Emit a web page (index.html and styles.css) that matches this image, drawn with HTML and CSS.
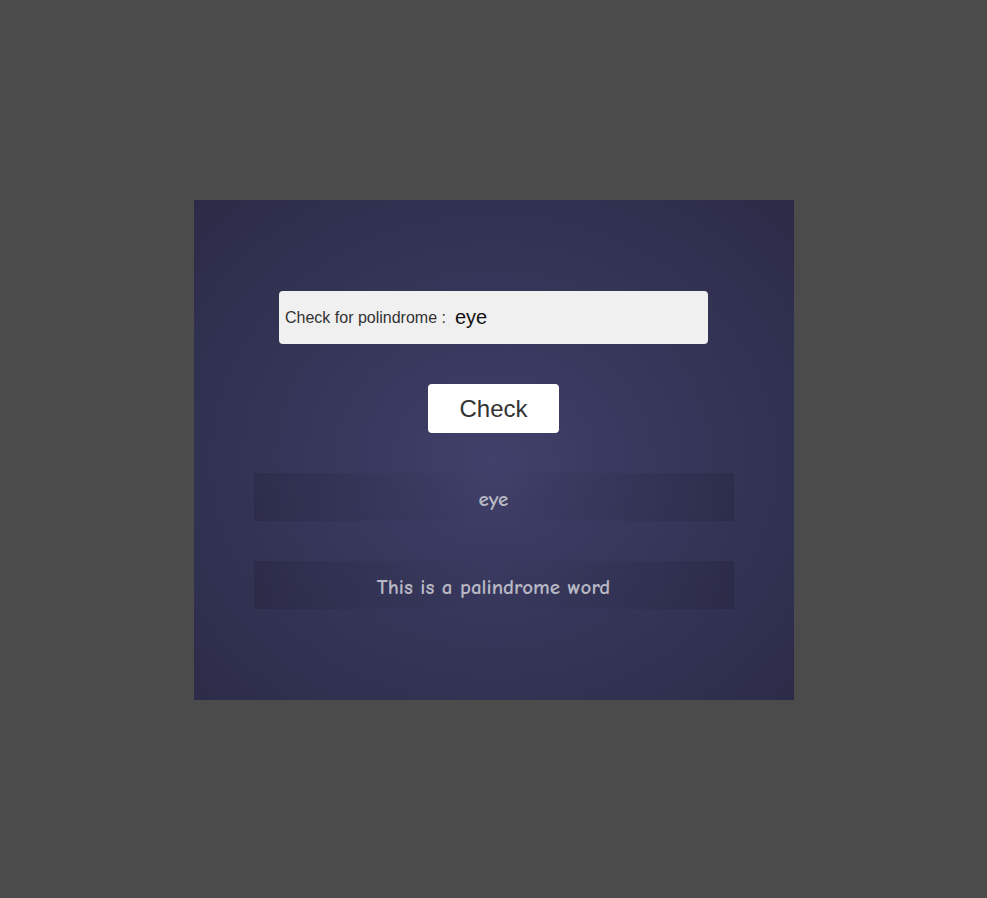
FILE: index.html
```html
<!DOCTYPE html>
<html>
<head>
<meta charset="utf-8">
<link rel="stylesheet" href="styles.css">
</head>
<body>
<div class="stage">
  <div class="card">
    <div class="field">
      <label class="label">Check for polindrome :</label>
      <span class="value">eye</span>
    </div>
    <button class="btn">Check</button>
    <div class="result">eye</div>
    <div class="result">This is a palindrome word</div>
  </div>
</div>
</body>
</html>
```
FILE: styles.css
```css
html, body {
  margin: 0;
  padding: 0;
  background: #4b4b4b;
  height: 100%;
}
.stage {
  display: flex;
  justify-content: center;
  padding-top: 200px;
}
.card {
  width: 600px;
  height: 500px;
  box-sizing: border-box;
  background: radial-gradient(ellipse at 50% 52%, #40406a 0%, #36365a 45%, #2b2b47 100%);
  display: flex;
  flex-direction: column;
  align-items: center;
  padding-top: 91px;
}
.field {
  width: 429px;
  height: 53px;
  box-sizing: border-box;
  background: #f0f0f0;
  border-radius: 4px;
  display: flex;
  align-items: center;
  padding-left: 6px;
  font-family: "Liberation Sans", Arial, sans-serif;
}
.label {
  font-size: 16px;
  color: #333;
  margin-right: 9px;
  margin-top: 1px;
}
.value {
  font-size: 20px;
  color: #111;
  margin-top: -1px;
}
.btn {
  margin-top: 40px;
  width: 131px;
  height: 49px;
  background: #fff;
  border: none;
  border-radius: 4px;
  font-family: "Liberation Sans", Arial, sans-serif;
  font-size: 24px;
  color: #333;
  padding: 0;
}
.result {
  margin-top: 40px;
  width: 480px;
  height: 48px;
  box-sizing: border-box;
  padding-top: 3px;
  display: flex;
  align-items: center;
  justify-content: center;
  background: linear-gradient(to right, rgba(0,0,0,0.12), rgba(0,0,0,0) 50%, rgba(0,0,0,0.12));
  font-family: "Comic Sans MS", "Comic Neue", "DejaVu Sans", sans-serif;
  font-size: 21px;
  font-weight: 600;
  color: #b8b8c4;
}
```
